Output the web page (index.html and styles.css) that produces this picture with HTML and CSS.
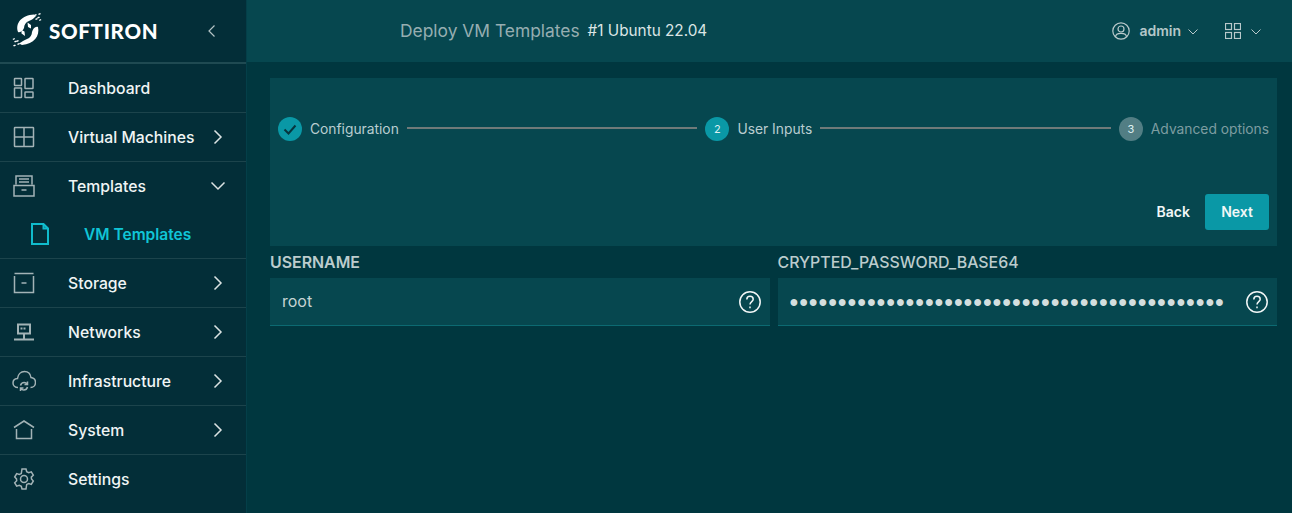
FILE: index.html

```html
<!DOCTYPE html>
<html lang="en">
<head>
    <meta charset="UTF-8">
    <meta name="viewport" content="width=device-width, initial-scale=1.0">
    <title>Deploy VM Templates</title>
    <link rel="stylesheet" href="styles.css">
</head>
<body>
    <div class="wrapper">
        <!-- Sidebar (Left) -->
        <aside class="sidebar">
            <div class="brand">
                <svg class="brand-mark" width="30" height="34" viewBox="0 0 30 34">
                    <path d="M6 19C3 10 10 2 22 1.500l2 1.500c-2 2-4 4-7 5-3 1-5 4-5 7-1 2-3 5-6 4z"/>
                    <path d="M26 14c2 9-4 17-16 18l-3-1.500c3-1.500 5-3.500 8-4.500 3-1 5-4 5-7 1-3 3-6 6-5z"/>
                    <path d="M22 2l2-1 1 1-2 1zM25 4.500l2-1 1 1-2 1zM26 1l2-1 1 1-2 1zM23 6l2-1 1 1-2 1zM27 7l1.500-1 1 1-2 1z"/>
                    <path d="M8 31l-2 1-1-1 2-1zM5 28.500l-2 1-1-1 2-1zM4 32.500l-2 1-1-1 2-1zM7 28l-2 1-1-1 2-1zM3 26l-1.500 1-1-1 2-1z"/>
                    <path d="M9.500 17l3 1.500.5 4.500-3.500-2.500zM19 15.500l-3-1.500-.5-4.500 3.500 2.500z"/>
                </svg>
                <span class="brand-name">SOFTIRON</span>
                <svg class="collapse" width="10" height="14" viewBox="0 0 10 14"><path d="M7.500 1.500 2 7l5.500 5.500"/></svg>
            </div>
            <nav>
                <a class="nav-item">
                    <svg class="nav-icon" viewBox="0 0 22 22"><rect x="1.500" y="1.500" width="7" height="7" rx=".5"/><rect x="1.500" y="11" width="7" height="9.500" rx=".5"/><rect x="12" y="1.500" width="8" height="10" rx=".5"/><rect x="12" y="15" width="8" height="5.500" rx=".5"/></svg>
                    <span class="nav-label">Dashboard</span>
                </a>
                <a class="nav-item">
                    <svg class="nav-icon" viewBox="0 0 22 22"><rect x="1.500" y="1.500" width="19" height="19" rx=".5"/><path d="M11 1.500v19M1.500 11h19"/></svg>
                    <span class="nav-label">Virtual Machines</span>
                    <svg class="chevron" width="10" height="16" viewBox="0 0 10 16"><path d="M1.500 1.500 8 8l-6.500 6.500"/></svg>
                </a>
                <div class="nav-group">
                    <a class="nav-item open">
                        <svg class="nav-icon" viewBox="0 0 22 22"><path d="M3 9.500V1h16v8.500M1 10.500h20v10.500H1zM6 4h10M6 7h10M8.500 15h5"/></svg>
                        <span class="nav-label">Templates</span>
                        <svg class="chevron-down" width="16" height="10" viewBox="0 0 16 10"><path d="M1.500 1.500 8 8l6.500-6.500"/></svg>
                    </a>
                    <a class="nav-sub">
                        <svg class="sub-icon" width="18" height="22" viewBox="0 0 18 22"><path d="M1 1h11.500L17 5.500V21H1zM12.500 1v4.500H17"/></svg>
                        <span>VM Templates</span>
                    </a>
                </div>
                <a class="nav-item">
                    <svg class="nav-icon" viewBox="0 0 22 22"><path d="M1.500 1.500h19M1.500 4v16.500h19V4M8.500 11h5"/></svg>
                    <span class="nav-label">Storage</span>
                    <svg class="chevron" width="10" height="16" viewBox="0 0 10 16"><path d="M1.500 1.500 8 8l-6.500 6.500"/></svg>
                </a>
                <a class="nav-item">
                    <svg class="nav-icon thick" viewBox="0 0 22 22"><path d="M5 3.500h12v9H5zM7.500 7.500h2M10.500 7.500h2M11 12.500V18M1 18.500h20"/></svg>
                    <span class="nav-label">Networks</span>
                    <svg class="chevron" width="10" height="16" viewBox="0 0 10 16"><path d="M1.500 1.500 8 8l-6.500 6.500"/></svg>
                </a>
                <a class="nav-item">
                    <svg class="nav-icon wide" viewBox="0 0 24 22"><path d="M6 17.500C3 17.500 1 15.500 1 13c0-2.500 2-4.300 4.500-4.500C6 4.500 8.800 1.500 12.500 1.500c3.500 0 6 2.600 6.500 6 2.500.3 4.500 2.300 4.500 5s-2 5-5 5"/><path d="M8.500 15.500c.5-2 2-3 3.700-3 1.300 0 2.300.6 3 1.600M15.500 17c-.5 2-2 3-3.700 3-1.300 0-2.300-.6-3-1.600M15.500 11.500v3h-3M8.500 21v-3h3"/></svg>
                    <span class="nav-label">Infrastructure</span>
                    <svg class="chevron" width="10" height="16" viewBox="0 0 10 16"><path d="M1.500 1.500 8 8l-6.500 6.500"/></svg>
                </a>
                <a class="nav-item">
                    <svg class="nav-icon" viewBox="0 0 22 22"><path d="M1 8.500 11 2l10 6.500M3.500 10v9.500h15V10"/></svg>
                    <span class="nav-label">System</span>
                    <svg class="chevron" width="10" height="16" viewBox="0 0 10 16"><path d="M1.500 1.500 8 8l-6.500 6.500"/></svg>
                </a>
                <a class="nav-item">
                    <svg class="nav-icon" viewBox="0 0 22 22"><circle cx="11" cy="11" r="3.500"/><path d="M9 1h4l.7 2.800 2 .9 2.600-.9 2 3.400-2 1.900.2 1.900 1.800 2-2 3.400-2.600-.9-2 .9L13 21H9l-.7-2.800-2-.9-2.600.9-2-3.400 2-2-.2-1.900-1.800-1.900 2-3.400 2.600.9 2-.9z"/></svg>
                    <span class="nav-label">Settings</span>
                </a>
            </nav>
        </aside>

        <div class="main">
            <!-- Top bar -->
            <header class="topbar">
                <span class="page-title">Deploy VM Templates</span>
                <span class="page-sub">#1 Ubuntu 22.04</span>
                <div class="top-user">
                    <svg class="user-icon" width="18" height="18" viewBox="0 0 18 18"><circle cx="9" cy="9" r="8.200"/><circle cx="9" cy="7" r="3"/><path d="M3.500 15c0-2.500 2-3.700 5.500-3.700s5.500 1.200 5.500 3.700"/></svg>
                    <span class="user-name">admin</span>
                    <svg class="caret" width="10" height="6" viewBox="0 0 10 6"><path d="M.5.500 5 5 9.500.500"/></svg>
                </div>
                <div class="top-apps">
                    <svg class="user-icon" width="16" height="16" viewBox="0 0 16 16"><rect x=".5" y=".5" width="6" height="6"/><rect x="9.500" y=".5" width="6" height="6"/><rect x=".5" y="9.500" width="6" height="6"/><rect x="9.500" y="9.500" width="6" height="6"/></svg>
                    <svg class="caret" width="10" height="6" viewBox="0 0 10 6"><path d="M.5.500 5 5 9.500.500"/></svg>
                </div>
            </header>

            <main class="content">
                <section class="panel">
                    <div class="steps">
                        <div class="step">
                            <span class="step-dot">
                                <svg width="14" height="11" viewBox="0 0 14 11"><path d="M1.500 5.500 5.500 9.500 12.500 1.500"/></svg>
                            </span>
                            <span class="step-label">Configuration</span>
                        </div>
                        <div class="step-line"></div>
                        <div class="step">
                            <span class="step-dot">2</span>
                            <span class="step-label">User Inputs</span>
                        </div>
                        <div class="step-line"></div>
                        <div class="step pending">
                            <span class="step-dot">3</span>
                            <span class="step-label">Advanced options</span>
                        </div>
                    </div>
                    <div class="actions">
                        <button class="btn-back">Back</button>
                        <button class="btn-next">Next</button>
                    </div>
                </section>

                <section class="fields">
                    <div class="field">
                        <label class="label-strong">USERNAME</label>
                        <div class="input-box">
                            <span class="input-value">root</span>
                            <svg class="help" width="24" height="24" viewBox="0 0 24 24"><circle cx="12" cy="12" r="10.200"/><path d="M8.800 9.500c0-2 1.400-3.200 3.200-3.200s3.200 1.200 3.200 2.900c0 2.400-3.200 2.400-3.200 5.300"/><path d="M12 16.500v1.800"/></svg>
                        </div>
                    </div>
                    <div class="field">
                        <label>CRYPTED_PASSWORD_BASE64</label>
                        <div class="input-box">
                            <span class="input-dots">•••••••••••••••••••••••••••••••••••••••••••••</span>
                            <svg class="help" width="24" height="24" viewBox="0 0 24 24"><circle cx="12" cy="12" r="10.200"/><path d="M8.800 9.500c0-2 1.400-3.200 3.200-3.200s3.200 1.200 3.200 2.900c0 2.400-3.200 2.400-3.200 5.300"/><path d="M12 16.500v1.800"/></svg>
                        </div>
                    </div>
                </section>
            </main>
        </div>
    </div>
</body>
</html>
```

FILE: styles.css

```css
html, body {
    margin: 0;
    padding: 0;
    height: 100%;
    overflow: hidden;
}
body {
    font-family: Inter, "Liberation Sans", sans-serif;
    background-color: #00373f;
    color: #cfdcdc;
}
.wrapper {
    display: flex;
    height: 513px;
}
svg {
    fill: none;
    stroke-width: 1.5;
    flex: none;
}

/* Sidebar */
.sidebar {
    width: 246px;
    flex: none;
    background-color: #032e38;
    border-right: 1px solid #043f49;
}
.brand {
    display: flex;
    align-items: center;
    height: 62px;
    padding-left: 12px;
    border-bottom: 2px solid #1f4a52;
    box-sizing: content-box;
}
.brand-mark {
    fill: #fff;
    stroke: none;
    margin-top: -2px;
}
.brand-name {
    margin-left: 7px;
    font-family: Lato, sans-serif;
    font-weight: 900;
    font-size: 20.500px;
    letter-spacing: .7px;
    color: #fff;
}
.collapse {
    margin-left: 49px;
    stroke: #b5c4c6;
    stroke-width: 1.200;
}
.nav-item {
    display: flex;
    align-items: center;
    height: 48px;
    padding-left: 13px;
    border-bottom: 1px solid #1c444c;
    color: #f0f5f5;
    font-weight: 500;
    font-size: 15.750px;
}
.nav-item:last-child {
    border-bottom: none;
}
.nav-item.open {
    border-bottom: none;
}
.nav-group {
    border-bottom: 1px solid #1c444c;
}
.nav-icon {
    width: 22px;
    height: 22px;
    stroke: #a3b3b6;
}
.nav-icon.wide {
    width: 24px;
    margin: 0 -1px;
}
.nav-icon.thick {
    stroke-width: 2;
}
.nav-label {
    margin-left: 33px;
    flex: 1;
}
.chevron {
    margin-right: 23px;
    stroke: #dbe3e3;
}
.chevron-down {
    margin-right: 20px;
    stroke: #dbe3e3;
}
.nav-sub {
    display: flex;
    align-items: center;
    height: 48px;
    padding-left: 31px;
    color: #10c5d6;
    font-weight: 600;
    font-size: 15.500px;
}
.nav-sub span {
    margin-left: 35px;
}
.sub-icon {
    stroke: #10bccd;
    stroke-width: 2;
}

/* Top bar */
.main {
    flex: 1;
    min-width: 0;
}
.topbar {
    display: flex;
    align-items: center;
    height: 61px;
    padding-bottom: 1px;
    background-color: #06474f;
    padding-left: 153px;
    padding-right: 31px;
}
.page-title {
    font-size: 17.400px;
    color: #96aeb1;
}
.page-sub {
    margin-left: 8px;
    font-size: 15.300px;
    color: #dbe5e5;
}
.top-user {
    display: flex;
    align-items: center;
    margin-left: auto;
}
.user-icon {
    stroke: #b9c9cb;
    stroke-width: 1.200;
}
.user-name {
    margin-left: 9px;
    font-size: 14px;
    font-weight: 600;
    color: #b5c7c9;
}
.caret {
    margin-left: 7px;
    margin-top: 2px;
    stroke: #b9c9cb;
    stroke-width: 1;
}
.top-apps {
    display: flex;
    align-items: center;
    margin-left: 27px;
}
.top-apps .caret {
    margin-left: 10px;
}

/* Stepper panel */
.content {
    padding: 16px 15px 0 23px;
}
.panel {
    height: 168px;
    background-color: #06474f;
    padding-right: 8px;
    box-sizing: border-box;
}
.steps {
    display: flex;
    align-items: center;
    padding: 39px 0 0 8px;
}
.step {
    display: flex;
    align-items: center;
    font-size: 13.800px;
    color: #b9cdcf;
}
.step-label {
    margin-top: -1px;
}
.step-dot {
    display: flex;
    align-items: center;
    justify-content: center;
    width: 24px;
    height: 24px;
    margin-right: 8px;
    border-radius: 50%;
    background-color: #0a98a6;
    font-size: 11px;
    color: #dff0f2;
}
.step-dot svg {
    stroke: #06363f;
    stroke-width: 2;
}
.step-line {
    flex: 1;
    height: 2px;
    margin: -2px 8px 0;
    background-color: #6f7a79;
}
.step.pending {
    color: #7d9da1;
}
.step.pending .step-dot {
    background-color: #527e84;
}
.actions {
    display: flex;
    justify-content: flex-end;
    align-items: center;
    margin-top: 53px;
}
.actions button {
    font-family: inherit;
    font-size: 14px;
    font-weight: 600;
    color: #f2f7f7;
    border: none;
    cursor: pointer;
    padding-bottom: 2px;
}
.btn-back {
    background: none;
    padding: 0 15px;
    height: 36px;
}
.btn-next {
    width: 64px;
    height: 36px;
    background-color: #0a98a6;
    border-radius: 3px;
}

/* Fields */
.fields {
    display: flex;
    gap: 8px;
}
.field {
    flex: 1;
    min-width: 0;
}
.field label {
    display: block;
    height: 32px;
    line-height: 33px;
    font-size: 15.900px;
    font-weight: 500;
    color: #bccccd;
}
.field .label-strong {
    font-weight: 600;
}
.input-box {
    display: flex;
    align-items: center;
    height: 48px;
    padding: 0 8px 0 12px;
    background-color: #06474f;
    border-bottom: 1px solid #0c6a72;
    box-sizing: border-box;
}
.input-value {
    flex: 1;
    font-size: 16px;
    color: #c5d3d3;
    margin-top: -2px;
}
.input-dots {
    flex: 1;
    font-family: "Liberation Sans", sans-serif;
    font-size: 25px;
    letter-spacing: .92px;
    line-height: 30px;
    color: #d3dede;
    white-space: nowrap;
    overflow: hidden;
}
.help {
    stroke: #f2f7f7;
    stroke-width: 1.500;
}
```
